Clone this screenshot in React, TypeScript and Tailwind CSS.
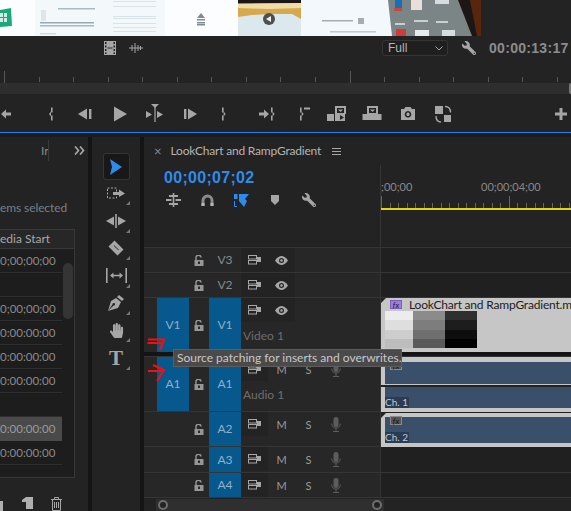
import { FaHandPaper, FaWrench } from "react-icons/fa";

const UI_FONT = { fontFamily: 'Lato, "Noto Sans", sans-serif' };

// the video frame in the program monitor, blurry on purpose
function VideoFrame() {
  return (
    <svg width="481" height="36" viewBox="0 0 481 36" className="block">
      <defs>
        <filter id="soft">
          <feGaussianBlur stdDeviation="0.45" />
        </filter>
      </defs>
      <rect width="481" height="36" fill="#fbfdfe" />
      <rect x="35" width="130" height="36" fill="#f3f8fb" />
      <rect x="301" width="90" height="36" fill="#f2f8fb" />
      <g filter="url(#soft)">
        <polygon points="0,10 11,8 12,26 0,27" fill="#1fa97a" />
        <rect x="0" y="13" width="7" height="9" fill="#cdeee2" />
        <rect x="3" y="13" width="1" height="9" fill="#1fa97a" />
        <rect x="0" y="17" width="7" height="1" fill="#1fa97a" />
        <rect x="58" y="8" width="37" height="1.5" fill="#a9bcc6" />
        <rect x="41" y="10" width="5" height="11" fill="#dde6ea" />
        <rect x="40" y="22" width="54" height="1.5" fill="#97a9b2" />
        <rect x="40" y="25" width="54" height="1.5" fill="#a8bac2" />
        <rect x="40" y="33" width="16" height="1.5" fill="#d0dce2" />
        {[1, 6, 16, 18, 23, 27, 31].map((y) => (
          <rect key={y} x="113" y={y} width="43" height="1" fill="#d8e2e7" />
        ))}
        <polygon points="201,13 205,18 197,18" fill="#7f8b92" />
        <rect x="197" y="19" width="8" height="1.5" fill="#7f8b92" />
        <rect x="197" y="22" width="8" height="1.5" fill="#7f8b92" />
        <rect x="197" y="24" width="8" height="1.5" fill="#7f8b92" />
        <rect x="238" y="0" width="63" height="36" fill="#dbe9ef" />
        <rect x="238" y="0" width="63" height="3.5" fill="#1d1712" />
        <polygon points="238,4 301,3 301,19 292,14 270,14 252,15 238,17" fill="#d7a94f" />
        <polygon points="238,4 301,3 301,8 270,9 238,8" fill="#f0dca6" />
        <circle cx="269" cy="19" r="6" fill="#4f4f4f" />
        <polygon points="266,19 271,16 271,22" fill="#f2f2f2" />
        <rect x="322" y="20" width="31" height="1.5" fill="#a3adb3" />
        <rect x="358" y="18" width="6" height="6" fill="#a3adb3" />
        <rect x="330" y="31" width="46" height="1.5" fill="#c0c9ce" />
        <polygon points="388,0 481,0 481,36 392,36" fill="#7b8585" />
        <polygon points="458,0 481,0 481,36 472,36" fill="#1e1714" />
        <polygon points="470,0 481,0 481,36 477,36" fill="#58280f" />
        <rect x="395" y="0" width="7" height="9" fill="#1770b5" />
        <rect x="394" y="8" width="8" height="3" fill="#c6473c" />
        <rect x="411" y="0" width="11" height="10" fill="#e8dfd8" />
        <rect x="435" y="0" width="14" height="4" fill="#d6dcdf" />
        <rect x="395" y="23" width="10" height="2" fill="#c8ced1" />
        <rect x="414" y="20" width="14" height="2" fill="#c8ced1" />
        <rect x="436" y="21" width="12" height="2" fill="#c8ced1" />
        <rect x="396" y="29" width="10" height="7" fill="#cf3a3a" />
        <rect x="415" y="30" width="14" height="6" fill="#e6eaec" />
        <rect x="442" y="30" width="13" height="6" fill="#d7dcde" />
      </g>
    </svg>
  );
}

function TopRuler() {
  const ticks = Array.from({ length: 17 }, (_, i) => 4 + i * 34.55);
  return (
    <svg width="571" height="12" className="block">
      {ticks.map((x, i) => (
        <rect key={x} x={Math.round(x)} y={i % 10 === 0 ? 0 : 6} width="1" height={i % 10 === 0 ? 12 : 5} fill="#565656" />
      ))}
    </svg>
  );
}

// transport buttons, all on a 20x20 box
function T({ className, children }: { className?: string; children: React.ReactNode }) {
  return (
    <svg width="20" height="20" viewBox="0 0 20 20" fill="#a6a6a6" className={`shrink-0 ${className ?? ""}`}>
      {children}
    </svg>
  );
}

function Brace({ x, flip }: { x: number; flip?: boolean }) {
  const tip = flip ? x + 3.6 : x - 2;
  const base = flip ? x + 1.6 : x;
  return (
    <>
      <rect x={x} y="3.5" width="1.6" height="5" />
      <rect x={x} y="11.5" width="1.6" height="5" />
      <polygon points={`${base},7.5 ${tip},10 ${base},12.5`} />
    </>
  );
}

function TransportRow() {
  return (
    <div className="flex h-[38px] items-center pt-[1px]">
      <T className="-ml-[4px]">
        <Brace x={2} />
        <polygon points="5,10 10,5.500 10,8.500 15,8.500 15,11.500 10,11.500 10,14.500" />
      </T>
      <T className="ml-[25px]">
        <Brace x={10} />
      </T>
      <T className="ml-[14px]">
        <polygon points="3,10 12,4.500 12,15.500" />
        <rect x="14" y="5" width="2.400" height="10" />
      </T>
      <T className="ml-[15px]">
        <polygon points="4,2.500 17,10 4,17.500" />
      </T>
      <T className="ml-[15px]">
        <polygon points="6,0 14,0 10,4" />
        <rect x="9.400" y="3" width="1.200" height="15" />
        <polygon points="1,7 7,10.500 1,14" />
        <polygon points="12,7 18,10.500 12,14" />
      </T>
      <T className="ml-[16px]">
        <rect x="3" y="5" width="2.400" height="10" />
        <polygon points="7,4.500 16,10 7,15.500" />
      </T>
      <T className="ml-[12px]">
        <Brace x={9} flip />
      </T>
      <T className="ml-[24px]">
        <polygon points="12,10 7,5.500 7,8.500 2,8.500 2,11.500 7,11.500 7,14.500" />
        <Brace x={14} flip />
      </T>
      <T className="ml-[18px]">
        <Brace x={5} flip />
        <rect x="9" y="3.500" width="6" height="2" />
      </T>
      <T className="ml-[12px]">
        <path d="M0 10h7v7H0zM8 5V2h11v8h-1v7H8zM10 4v5h7V4z" fillRule="evenodd" />
        <polygon points="11,5.500 16,5.500 13.500,8" />
        <polygon points="13,11 17,13.500 13,16" fill="#232323" />
      </T>
      <T className="ml-[15px]">
        <path d="M5 2h11v8h3.500v6H.5v-6H5zM7 4v5h7V4z" fillRule="evenodd" />
        <polygon points="8,5.500 13,5.500 10.500,8" />
      </T>
      <T className="ml-[16px]">
        <path d="M3 5h3l1.500-2h5L14 5h3v11H3zM10 7a3.300 3.300 0 1 0 .01 0zM10 8.600a1.700 1.700 0 1 1-.01 0z" fillRule="evenodd" />
      </T>
      <T className="ml-[15px]">
        <path d="M2 2h8v8H2zM11 11h7v7h-7z" />
        <path d="M12 2.500c3 0 5.500 2 5.500 6M8 18c-3 0-5-2-5-6" fill="none" stroke="#a6a6a6" strokeWidth="1.400" />
      </T>
      <T className="ml-[98px]">
        <rect x="8.500" y="4" width="3" height="12" />
        <rect x="4" y="8.500" width="12" height="3" />
      </T>
    </div>
  );
}

function ToolCell({ corner = true, children }: { corner?: boolean; children: React.ReactNode }) {
  return (
    <div className="relative flex h-[27.4px] w-[27px] shrink-0 items-center justify-center">
      {children}
      {corner && (
        <div className="absolute bottom-[2px] right-0 h-0 w-0 border-b-[4px] border-l-[4px] border-b-[#777] border-l-transparent" />
      )}
    </div>
  );
}

function ToolsPanel() {
  return (
    <div className="mr-[4px] flex w-[48px] flex-col items-center bg-[#232323] pt-[16px]">
      <div className="flex h-[27px] w-[27px] shrink-0 items-center justify-center rounded-[3px] border border-[#353535] bg-[#181818]">
        <svg width="14" height="16" viewBox="0 0 14 16">
          <polygon points="1,0 13,8 1,16 3,8" fill="#2d8ceb" />
        </svg>
      </div>
      <ToolCell>
        <svg width="19" height="13" viewBox="0 0 19 13" fill="#a6a6a6">
          <rect x="0.500" y="1" width="9" height="10" fill="none" stroke="#a6a6a6" strokeDasharray="2 1.500" />
          <polygon points="6,5 12,5 12,2.500 18,6.500 12,10 12,8 6,8" />
        </svg>
      </ToolCell>
      <ToolCell>
        <svg width="20" height="14" viewBox="0 0 20 14" fill="#a6a6a6">
          <rect x="9.200" y="0" width="1.600" height="14" />
          <polygon points="0,7 8,2.500 8,11.500" />
          <polygon points="20,7 12,2.500 12,11.500" />
        </svg>
      </ToolCell>
      <ToolCell>
        <svg width="16" height="16" viewBox="0 0 16 16" fill="#a6a6a6">
          <path d="M6.500 0.500L15.500 9.500L9.500 15.500L0.500 6.500zM5.700 5.700L8 8L10.300 10.300L10.800 9.800L6.200 5.200z" fillRule="evenodd" />
        </svg>
      </ToolCell>
      <ToolCell>
        <svg width="21" height="15" viewBox="0 0 21 15" fill="#a6a6a6">
          <rect x="0" y="0" width="1.600" height="15" />
          <rect x="19.400" y="0" width="1.600" height="15" />
          <polygon points="4,7.500 7.500,4.500 7.500,6.800 13.500,6.800 13.500,4.500 17,7.500 13.500,10.500 13.500,8.200 7.500,8.200 7.500,10.500" />
        </svg>
      </ToolCell>
      <ToolCell>
        <svg width="16" height="16" viewBox="0 0 16 16" fill="#a6a6a6">
          <path d="M11 0l5 4-2 2-5-4zM8 3l5 4-3 6-10 3 5.500-5.500a1.300 1.300 0 1 0-1-1L0 16 3 6z" />
        </svg>
      </ToolCell>
      <ToolCell>
        <FaHandPaper size={15} color="#a6a6a6" />
      </ToolCell>
      <ToolCell>
        <span className="text-[21px] leading-none font-bold text-[#a6a6a6]" style={{ fontFamily: '"Liberation Serif", serif' }}>
          T
        </span>
      </ToolCell>
    </div>
  );
}

const BIN_ROWS: { text: string; active?: boolean }[] = [
  { text: "0;00;00;00" },
  { text: "" },
  { text: "0;00;00;00" },
  { text: "0:00:00:00" },
  { text: "0:00:00:00" },
  { text: "0:00:00:00" },
  { text: "" },
  { text: "0:00:00:00", active: true },
  { text: "0:00:00:00" },
];

function ProjectPanel() {
  return (
    <div className="mr-[4px] flex w-[88px] flex-col bg-[#232323]">
      <div className="relative h-[24px]">
        <span className="absolute left-[41px] top-[6px] text-[12px] leading-[16px] text-[#8a8a8a]">Ir</span>
        <div className="absolute left-[48px] top-[3px] h-[21px] w-px bg-[#3a3a3a]" />
        <svg width="11" height="9" viewBox="0 0 11 9" className="absolute left-[74px] top-[9px]" fill="none" stroke="#a6a6a6" strokeWidth="1.700">
          <path d="M1 0.500l3.500 4-3.500 4M6 0.500l3.500 4-3.500 4" />
        </svg>
      </div>
      <div className="mt-[39px] h-[16px] text-[12px] leading-[16px] tracking-[-0.1px] whitespace-nowrap text-[#75808c]">
        ems selected
      </div>
      <div className="mt-[13px] h-[249px] w-[75px] overflow-hidden border-r border-b border-[#383838] bg-[#1d1d1d]">
        <div className="h-[20px] border-t border-b border-[#383838] bg-[#272727] text-[12px] leading-[18px] whitespace-nowrap text-[#a8a8a8]">
          edia Start
        </div>
        <div className="relative">
          {BIN_ROWS.map((row, i) => (
            <div
              key={i}
              className={
                row.active
                  ? "h-[24px] w-[62px] bg-[#4a4a4a] text-[11.5px] leading-[23px] text-[#9a9a9a]"
                  : "h-[24px] w-[62px] border-b border-[#2f2f2f] text-[11.5px] leading-[23px] text-[#8a8a8a]"
              }
            >
              {row.text}
            </div>
          ))}
          <div className="absolute left-[63px] top-[14px] h-[56px] w-[10px] rounded-[5px] bg-[#353535]" />
        </div>
      </div>
      <div className="relative flex-1">
        <div className="absolute bottom-0 left-0 h-[10px] w-[3px] bg-[#b0b0b0]" />
        <svg width="11" height="12" viewBox="0 0 11 12" className="absolute left-[22px] top-[19px]" fill="#b0b0b0">
          <path d="M0 3L4 0h7v12H4V5H0z" />
        </svg>
        <svg width="11" height="14" viewBox="0 0 11 14" className="absolute left-[51px] top-[19px]" fill="none" stroke="#a6a6a6">
          <path d="M0 2.500h11M3.500 2.500V.5h4v2M1.500 2.500v11h8v-11M3.500 5v6M5.500 5v6M7.500 5v6" />
        </svg>
      </div>
    </div>
  );
}

function Lock() {
  return (
    <svg width="10" height="11" viewBox="0 0 10 11">
      <path d="M2 5V3a2.500 2.500 0 0 1 5-.5" fill="none" stroke="#969696" strokeWidth="1.400" />
      <rect x="0.500" y="5" width="9" height="6" fill="#969696" />
      <rect x="4" y="6.500" width="2" height="2.500" fill="#2a2a2a" />
    </svg>
  );
}

function SyncIcon() {
  return (
    <svg width="13" height="10" viewBox="0 0 13 10" fill="none" stroke="#a6a6a6">
      <rect x="0.500" y="0.500" width="8" height="3.500" />
      <rect x="0.500" y="5.500" width="8" height="3.500" />
      <path d="M9 2h4v5H9z" fill="#a6a6a6" stroke="none" />
    </svg>
  );
}

function Eye() {
  return (
    <svg width="13" height="9" viewBox="0 0 13 9">
      <path d="M0 4.500C2.500 1 4.500 0 6.500 0s4 1 6.500 4.500C10.500 8 8.500 9 6.500 9S2.500 8 0 4.500z" fill="#a6a6a6" />
      <circle cx="6.500" cy="4.500" r="2.500" fill="#272727" />
      <circle cx="6.500" cy="4.500" r="1.300" fill="#a6a6a6" />
    </svg>
  );
}

function Mic() {
  return (
    <svg width="10" height="15" viewBox="0 0 10 15" fill="#5c5c5c">
      <rect x="2.500" y="0" width="5" height="10" rx="2.500" />
      <path d="M0.700 6.500c0 3 2 4.500 4.300 4.500s4.300-1.500 4.300-4.500M5 11v3M2 14.500h6" fill="none" stroke="#5c5c5c" />
    </svg>
  );
}

function Controls({ kind }: { kind: "video" | "audio" }) {
  return (
    <div className="flex h-[24px] shrink-0 items-center">
      <div className="flex h-full w-[27px] items-center justify-center bg-[#232323]">
        <SyncIcon />
      </div>
      {kind === "video" ? (
        <div className="flex h-full w-[27px] items-center justify-center bg-[#232323]">
          <Eye />
        </div>
      ) : (
        <>
          <div className="w-[27px] text-center text-[11px] leading-none text-[#9a9a9a]">M</div>
          <div className="w-[27px] text-center text-[11px] leading-none text-[#9a9a9a]">S</div>
          <div className="flex w-[27px] justify-center">
            <Mic />
          </div>
        </>
      )}
    </div>
  );
}

type Track = {
  target: string;
  source?: string;
  kind: "video" | "audio";
  name?: string;
  rowH: string;
  clip?: React.ReactNode;
};

function FxBadge({ purple }: { purple?: boolean }) {
  return (
    <div
      className={
        purple
          ? "flex h-[9px] w-[12px] items-center justify-center border border-[#7a5fc0] bg-[#9a7fe0] text-[8px] leading-none text-[#1c1c1c] italic"
          : "flex h-[9px] w-[12px] items-center justify-center border border-[#8a8a8a] bg-[#555] text-[8px] leading-none text-[#141414] italic"
      }
    >
      fx
    </div>
  );
}

function Corner() {
  return (
    <svg width="6" height="6" className="absolute left-0 top-0">
      <polygon points="0,0 5,0 0,5" fill="#232323" />
    </svg>
  );
}

const THUMB = [
  ["#ececec", "#dedede", "#cdcdcd", "#bdbdbd"],
  ["#8b8b8b", "#7d7d7d", "#6f6f6f", "#5a5a5a"],
  ["#2f2f2f", "#1d1d1d", "#0e0e0e", "#000000"],
];

function VideoClip() {
  return (
    <div className="relative h-[54px] overflow-hidden bg-[#c6c6c6] pl-[4px]">
      <Corner />
      <div className="flex h-[13px] items-center">
        <div className="ml-[5px]">
          <FxBadge purple />
        </div>
        <span className="ml-[7px] text-[12px] leading-none tracking-[-0.2px] whitespace-nowrap text-[#1d1d1d]">
          LookChart and RampGradient.m
        </span>
      </div>
      <div className="flex h-[37px] w-[92px]">
        {THUMB.map((col, i) => (
          <div key={i} className={i === 0 ? "flex w-[28px] flex-col" : "flex w-[32px] flex-col"}>
            {col.map((c) => (
              <div key={c} className="flex-1" style={{ backgroundColor: c }} />
            ))}
          </div>
        ))}
      </div>
    </div>
  );
}

function ChLabel({ text }: { text: string }) {
  return (
    <div className="h-[11px] w-[24px] bg-[#2a3c54] text-[10px] leading-[11px] whitespace-nowrap text-[#c2c8cf]">{text}</div>
  );
}

function AudioClip1() {
  return (
    <div className="relative h-[55px] bg-[#c6c6c6] pt-[5px] pb-[3px]">
      <Corner />
      <div className="absolute left-[9px] top-[4px]">
        <FxBadge />
      </div>
      <div className="ml-[4px] h-[22px] bg-[#3a4f69]" />
      <div className="h-[1px] bg-[#c6c6c6]" />
      <div className="h-[2px] bg-[#222]" />
      <div className="ml-[4px] flex h-[21px] flex-col justify-end bg-[#3a4f69]">
        <ChLabel text="Ch. 1" />
      </div>
    </div>
  );
}

function AudioClip2() {
  return (
    <div className="relative mt-[1px] h-[34px] bg-[#c6c6c6] pt-[4px] pb-[4px] pl-[4px]">
      <Corner />
      <div className="absolute left-[9px] top-[3px]">
        <FxBadge />
      </div>
      <div className="flex h-[26px] flex-col justify-end bg-[#3a4f69]">
        <ChLabel text="Ch. 2" />
      </div>
    </div>
  );
}

const TRACKS: Track[] = [
  { target: "V3", kind: "video", rowH: "h-[25px]" },
  { target: "V2", kind: "video", rowH: "h-[25px]" },
  { target: "V1", source: "V1", kind: "video", name: "Video 1", rowH: "h-[55px]", clip: <VideoClip /> },
  { target: "A1", source: "A1", kind: "audio", name: "Audio 1", rowH: "h-[55px]", clip: <AudioClip1 /> },
  { target: "A2", kind: "audio", rowH: "h-[35px]", clip: <AudioClip2 /> },
  { target: "A3", kind: "audio", rowH: "h-[26px]" },
  { target: "A4", kind: "audio", rowH: "h-[25px]" },
];

function TrackRow({ track }: { track: Track }) {
  const active = track.target !== "V3" && track.target !== "V2";
  return (
    <>
      {track.target === "A1" && <div className="h-[4px] bg-[#141414]" />}
      <div className={`flex ${track.rowH} border-t border-[#353535]`}>
        <div className="flex w-[237px] shrink-0 border-r border-[#353535] bg-[#272727]">
          <div className="w-[13px] shrink-0" />
          <div className="flex w-[32px] shrink-0 items-center justify-center">
            {track.source && (
              <div className="flex h-full w-full items-center justify-center bg-[#07588d] text-[12px] text-[#8fb0c8]">
                {track.source}
              </div>
            )}
          </div>
          <div className="flex w-[20px] shrink-0 items-center justify-center">
            <Lock />
          </div>
          <div
            className={
              active
                ? "flex w-[32px] shrink-0 items-center justify-center bg-[#07588d] text-[12px] text-[#8fb0c8]"
                : "flex w-[32px] shrink-0 items-center justify-center text-[12px] text-[#8a8a8a]"
            }
          >
            {track.target}
          </div>
          <div className="flex min-w-0 flex-1 flex-col">
            <Controls kind={track.kind} />
            {track.name && (
              <div className="mt-[1px] pl-[2px] text-[12px] leading-[26px] text-[#6e6e6e]">{track.name}</div>
            )}
          </div>
        </div>
        <div className="min-w-0 flex-1 bg-[#202020]">{track.clip}</div>
      </div>
    </>
  );
}

function TimelineIcons() {
  return (
    <div className="flex h-[20px] items-center">
      <div className="flex w-[34px] justify-center">
        <svg width="15" height="14" viewBox="0 0 15 14" fill="#a6a6a6">
          <rect x="6.700" y="0" width="1.600" height="14" />
          <rect x="3" y="2" width="9" height="2" />
          <rect x="0" y="6" width="5.500" height="2" />
          <rect x="9.500" y="6" width="5.500" height="2" />
          <rect x="3" y="10" width="9" height="2" />
        </svg>
      </div>
      <div className="flex w-[34px] justify-center">
        <svg width="13" height="12" viewBox="0 0 13 12">
          <path d="M2 12V6.500a4.500 4.500 0 0 1 9 0V12" fill="none" stroke="#8a8a8a" strokeWidth="3" />
          <rect x="0.500" y="9" width="3" height="3" fill="#b5b5b5" />
          <rect x="9.500" y="9" width="3" height="3" fill="#b5b5b5" />
        </svg>
      </div>
      <div className="flex w-[34px] justify-center">
        <svg width="15" height="13" viewBox="0 0 15 13">
          <polygon points="5,0 15,0 11,5 13,7 10,13 5,7" fill="#2d8ceb" />
          <rect x="0" y="0" width="3.500" height="5" fill="#2d8ceb" />
          <path d="M0.500 7v5.500H3" fill="none" stroke="#2d8ceb" />
        </svg>
      </div>
      <div className="flex w-[34px] justify-center">
        <svg width="8" height="10" viewBox="0 0 8 10">
          <polygon points="0,0 8,0 8,6 4,10 0,6" fill="#a6a6a6" />
        </svg>
      </div>
      <div className="flex w-[34px] justify-center">
        <FaWrench size={14} color="#a6a6a6" className="-scale-x-100" />
      </div>
    </div>
  );
}

function TimelineRuler() {
  const ticks = Array.from({ length: 23 }, (_, i) => i);
  return (
    <div className="min-w-0 flex-1 overflow-hidden pt-[15px]">
      <div className="relative h-[14px] text-[11px] leading-[14px] text-[#8a8a8a]">
        <span>;00;00</span>
        <span className="absolute left-[100px]">00;00;04;00</span>
      </div>
      <svg width="190" height="12" className="mt-[2px] block">
        {ticks.map((i) => (
          <rect key={i} x={Math.round(i * 8.53)} y={i % 15 === 0 ? 0 : 7} width="1" height={i % 15 === 0 ? 12 : 5} fill="#666" />
        ))}
      </svg>
      <div className="h-[2px] bg-[#e4d400]" />
    </div>
  );
}

function Timeline() {
  return (
    <div className="flex min-w-0 flex-1 flex-col bg-[#232323]">
      <div className="flex h-[28px] items-center">
        <span className="ml-[10px] text-[13px] leading-none text-[#8a8a8a]">×</span>
        <span className="ml-[9px] text-[12px] leading-none tracking-[-0.2px] whitespace-nowrap text-[#b4b4b4]">
          LookChart and RampGradient
        </span>
        <svg width="9" height="7" viewBox="0 0 9 7" fill="#a6a6a6" className="ml-[11px]">
          <rect width="9" height="1" />
          <rect y="3" width="9" height="1" />
          <rect y="6" width="9" height="1" />
        </svg>
      </div>
      <div className="flex h-[82px]">
        <div className="w-[237px] shrink-0 border-r border-[#353535]">
          <div
            className="pl-[20px] text-[16px] leading-[26px] font-bold tracking-[0.3px] text-[#2d8ceb]"
            style={{ fontFamily: '"Liberation Sans", sans-serif' }}
          >
            00;00;07;02
          </div>
          <div className="ml-[12px] mt-[-1px]">
            <TimelineIcons />
          </div>
        </div>
        <TimelineRuler />
      </div>
      {TRACKS.map((t) => (
        <TrackRow key={t.target} track={t} />
      ))}
      <div className="flex flex-1 items-end border-t border-[#353535]">
        <div className="ml-[12px] flex h-[12px] w-[228px] items-center justify-between bg-[#2f2f2f] px-[2px]">
          <div className="h-[10px] w-[10px] rounded-full border-2 border-[#6e6e6e] bg-[#232323]" />
          <div className="h-[10px] w-[10px] rounded-full border-2 border-[#6e6e6e] bg-[#232323]" />
        </div>
      </div>
    </div>
  );
}

function RedArrows() {
  return (
    <svg width="20" height="46" viewBox="0 0 20 46" className="absolute left-[146px] top-[337px]" fill="none" stroke="#ee1111" strokeWidth="2.200">
      <path d="M2 2.500H18L14 13M1.500 6H15" />
      <path d="M2 34H17M7 28L18 33L11 44" />
    </svg>
  );
}

export default function App() {
  return (
    <div className="relative flex h-[511px] w-[571px] flex-col overflow-hidden bg-[#232323]" style={UI_FONT}>
      <div className="h-[36px] shrink-0">
        <VideoFrame />
      </div>

      <div className="flex h-[35px] shrink-0 items-start pt-[4px]">
        <svg width="12" height="14" viewBox="0 0 12 14" fill="#a6a6a6" className="ml-[104px] mt-[1px]">
          <path d="M0 0h12v14H0zM1 1v2h1.500V1zM1 4.500v2h1.500v-2zM1 8v2h1.500V8zM1 11.500v1.500h1.500v-1.500zM9.500 1v2H11V1zM9.500 4.500v2H11v-2zM9.500 8v2H11V8zM9.500 11.500v1.500H11v-1.500zM3.500 6.500v1h5v-1z" fillRule="evenodd" />
        </svg>
        <svg width="14" height="10" viewBox="0 0 14 10" fill="none" stroke="#a6a6a6" className="ml-[13px] mt-[3px]">
          <path d="M0 5h14M3 2v6M6 0v10M9 2v6M11.500 3v4" />
        </svg>
        <div className="ml-[239px] flex h-[16px] w-[66px] items-center justify-between rounded-[3px] border border-[#353535] bg-[#1f1f1f] pl-[5px] pr-[4px] text-[12px] text-[#b5b5b5]">
          <span className="leading-none" style={{ fontFamily: '"Liberation Sans", sans-serif' }}>
            Full
          </span>
          <svg width="8" height="5" viewBox="0 0 8 5" fill="none" stroke="#a6a6a6">
            <path d="M0.500 0.500L4 4L7.500 0.500" />
          </svg>
        </div>
        <FaWrench size={14} color="#a6a6a6" className="ml-[14px] mt-[1px] -scale-x-100" />
        <span
          className="ml-[13px] text-[14px] leading-[16px] font-bold tracking-[0.3px] whitespace-nowrap text-[#8c8c8c]"
          style={{ fontFamily: '"Liberation Sans", sans-serif' }}
        >
          00:00:13:17
        </span>
      </div>

      <div className="h-[12px] shrink-0">
        <TopRuler />
      </div>
      <div className="flex h-[11px] shrink-0 justify-end bg-[#2e2e2e]">
        <div className="h-[11px] w-[2px] rounded-l-full bg-[#777]" />
      </div>

      <TransportRow />

      <div className="h-[1px] shrink-0 bg-[#2680eb]" />
      <div className="h-[4px] shrink-0 bg-[#1c1c1c]" />

      <div className="flex min-h-0 flex-1 bg-[#141414]">
        <ProjectPanel />
        <ToolsPanel />
        <Timeline />
      </div>

      <RedArrows />
      <div className="absolute left-[173px] top-[349px] flex h-[18px] w-[229px] items-center border border-[#5e5e5e] bg-[#4a4a4a] pl-[3px] text-[12px] leading-none whitespace-nowrap text-[#c8c8c8]">
        Source patching for inserts and overwrites.
      </div>
    </div>
  );
}
